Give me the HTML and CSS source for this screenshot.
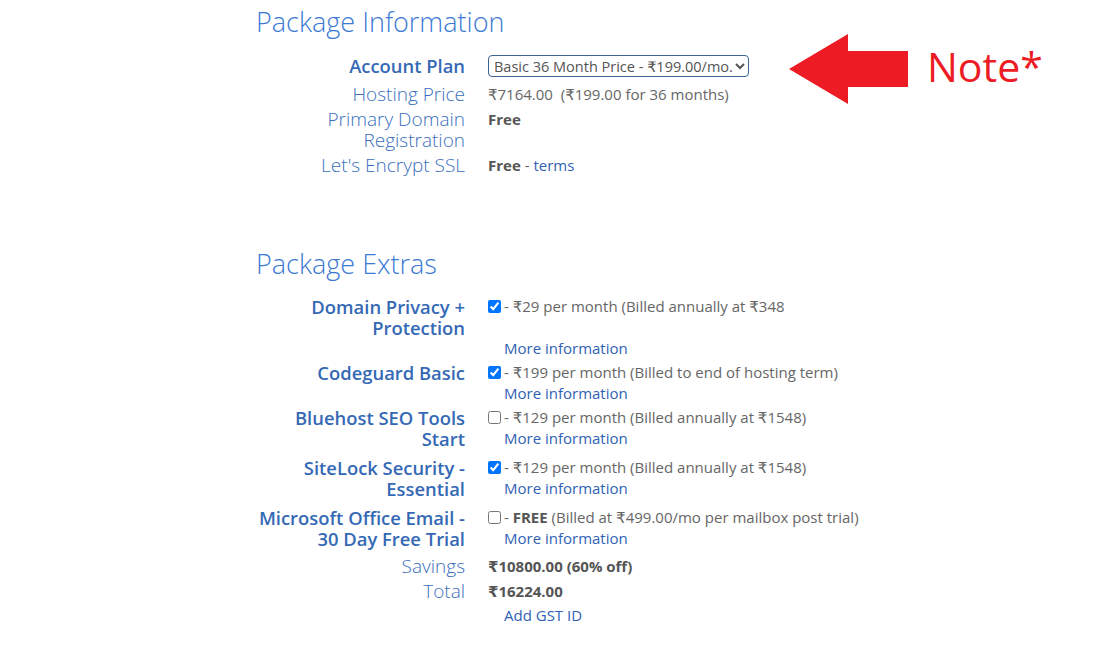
FILE: index.html
```html
<!DOCTYPE html>
<html lang="en">
<head>
<meta charset="utf-8">
<title>Package Information</title>
<link rel="stylesheet" href="styles.css">
</head>
<body>
<main class="page">
  <section class="section">
    <h2 class="section-title">Package Information</h2>
    <div class="row row--plan">
      <div class="label label--strong">Account Plan</div>
      <div class="value">
        <select class="plan-select">
          <option>Basic 36 Month Price - ₹199.00/mo.</option>
        </select>
      </div>
    </div>
    <div class="row">
      <div class="label">Hosting Price</div>
      <div class="value">₹7164.00&nbsp; (₹199.00 for 36 months)</div>
    </div>
    <div class="row">
      <div class="label">Primary Domain<br>Registration</div>
      <div class="value"><b>Free</b></div>
    </div>
    <div class="row">
      <div class="label">Let's Encrypt SSL</div>
      <div class="value"><b>Free</b> - <a class="link" href="#">terms</a></div>
    </div>
  </section>

  <section class="section section--extras">
    <h2 class="section-title">Package Extras</h2>
    <div class="row row--flush">
      <div class="label label--strong">Domain Privacy +<br>Protection</div>
      <div class="value">
        <div class="opt"><input type="checkbox" class="check" checked><span>- ₹29 per month (Billed annually at ₹348</span></div>
        <div class="more more--gap"><a class="link" href="#">More information</a></div>
      </div>
    </div>
    <div class="row row--flush">
      <div class="label label--strong">Codeguard Basic</div>
      <div class="value">
        <div class="opt"><input type="checkbox" class="check" checked><span>- ₹199 per month (Billed to end of hosting term)</span></div>
        <div class="more"><a class="link" href="#">More information</a></div>
      </div>
    </div>
    <div class="row row--spaced">
      <div class="label label--strong">Bluehost SEO Tools<br>Start</div>
      <div class="value">
        <div class="opt"><input type="checkbox" class="check"><span>- ₹129 per month (Billed annually at ₹1548)</span></div>
        <div class="more"><a class="link" href="#">More information</a></div>
      </div>
    </div>
    <div class="row row--spaced">
      <div class="label label--strong">SiteLock Security -<br>Essential</div>
      <div class="value">
        <div class="opt"><input type="checkbox" class="check" checked><span>- ₹129 per month (Billed annually at ₹1548)</span></div>
        <div class="more"><a class="link" href="#">More information</a></div>
      </div>
    </div>
    <div class="row row--spaced-sm">
      <div class="label label--strong">Microsoft Office Email -<br>30 Day Free Trial</div>
      <div class="value">
        <div class="opt"><input type="checkbox" class="check"><span>- <b>FREE</b> (Billed at ₹499.00/mo per mailbox post trial)</span></div>
        <div class="more"><a class="link" href="#">More information</a></div>
      </div>
    </div>
    <div class="row">
      <div class="label">Savings</div>
      <div class="value"><b>₹10800.00 (60% off)</b></div>
    </div>
    <div class="row">
      <div class="label">Total</div>
      <div class="value">
        <b>₹16224.00</b>
        <div class="more more--gst"><a class="link" href="#">Add GST ID</a></div>
      </div>
    </div>
  </section>
</main>

<div class="note">
  <svg class="note-arrow" width="120" height="72" viewBox="0 0 120 72" aria-hidden="true">
    <polygon points="0,35 59,0 59,17 119,17 119,53 59,53 59,70" fill="#ed1c24"/>
  </svg>
  <span class="note-text">Note*</span>
</div>
</body>
</html>
```

FILE: styles.css
```css
* { box-sizing: border-box; }

html, body {
  margin: 0;
  padding: 0;
  background: #ffffff;
}

body {
  font-family: "Open Sans", "DejaVu Sans", sans-serif;
  color: #666666;
  position: relative;
  min-height: 658px;
}

.page {
  padding: 4px 0 0 256px;
  width: 1096px;
}

.section-title {
  margin: 0 0 13px 0;
  font-size: 27px;
  line-height: 36px;
  font-weight: 300;
  color: #3c7ad4;
}

.section--extras {
  margin-top: 69px;
}

.section--extras .section-title {
  margin-bottom: 11px;
}

.row {
  display: grid;
  grid-template-columns: 209px 1fr;
  column-gap: 23px;
  align-items: start;
  padding: 3px 0 1px;
}

.row--plan {
  margin-top: -1px;
  padding: 2px 0 4px;
  align-items: center;
}

.row--flush {
  padding-bottom: 0;
}

.row--spaced {
  padding-bottom: 5px;
}

.row--spaced-sm {
  padding-bottom: 4px;
}

.label {
  text-align: right;
  font-size: 19px;
  line-height: 21px;
  font-weight: 300;
  color: #3a6fbd;
  white-space: nowrap;
}

.label--strong {
  font-size: 18.4px;
  font-weight: 600;
  color: #3569b5;
}

.value {
  font-size: 15px;
  line-height: 21px;
  font-weight: 400;
  color: #666666;
}

.value b {
  font-weight: 700;
  color: #555555;
}

.plan-select {
  font-family: "Open Sans", "DejaVu Sans", sans-serif;
  font-size: 14.5px;
  color: #555555;
  height: 22px;
  width: 261px;
  margin: 1px 0 0 0;
  padding: 0 0 0 1px;
  border: 1px solid #3d6294;
  border-radius: 4px;
  background: #ffffff;
}

.opt {
  display: flex;
  align-items: center;
}

.check {
  width: 13px;
  height: 13px;
  margin: 0 3px 0 0;
  flex: none;
}

.more {
  padding-left: 16px;
}

.more--gap {
  margin-top: 21px;
}

.more--gst {
  margin-top: 3px;
}

.link {
  color: #3062b5;
  text-decoration: none;
  font-weight: 400;
}

.note {
  position: absolute;
  left: 789px;
  top: 34px;
  display: flex;
  align-items: center;
  gap: 18px;
}

.note-arrow {
  display: block;
}

.note-text {
  font-family: "Open Sans", "DejaVu Sans", sans-serif;
  font-size: 41px;
  line-height: 54px;
  margin-top: -8px;
  color: #ed1c24;
  font-weight: 400;
}
```
